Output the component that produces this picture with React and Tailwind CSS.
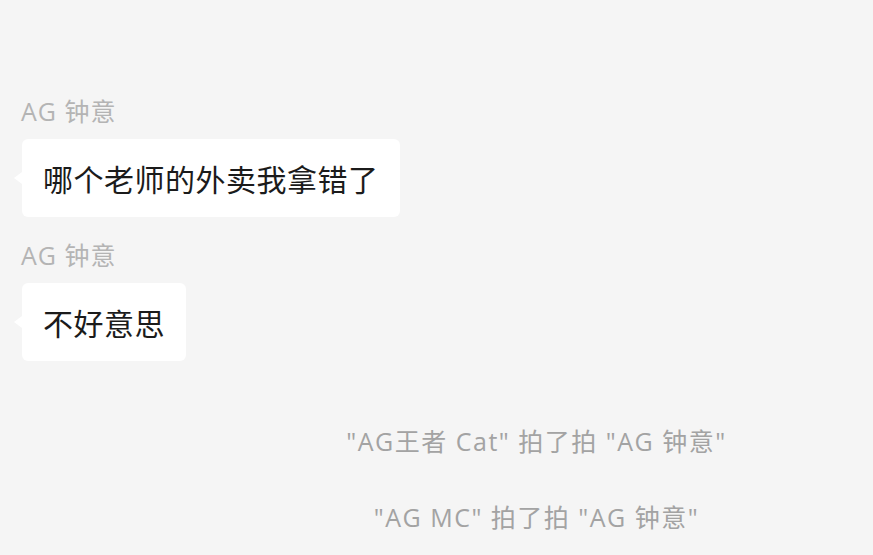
import React from "react";

const CJK = { fontFamily: '"Noto Sans CJK SC", "Noto Sans", sans-serif' };
const MIXED = { fontFamily: '"Open Sans", "Noto Sans CJK SC", sans-serif' };

function Sender({ name, className = "" }) {
    return (
        <div className={`text-[25px] leading-[32px] tracking-[1px] text-[#b4b4b4] ${className}`} style={MIXED}>
            {name}
        </div>
    );
}

function Bubble({ children, className = "" }) {
    return (
        <div
            className={`relative w-fit rounded-[6px] bg-white px-[21px] py-[21px] text-[30px] leading-[36px] tracking-[0.5px] text-[#1b1b1b] ${className}`}
            style={CJK}
        >
            <span className="absolute left-[-8px] top-1/2 -translate-y-1/2 border-y-[6px] border-r-[8px] border-y-transparent border-r-white" />
            {children}
        </div>
    );
}

function SystemNote({ children }) {
    return (
        <div className="text-center text-[25px] leading-[30px] tracking-[1.5px] text-[#a3a3a3]" style={MIXED}>
            {children}
        </div>
    );
}

export default function App() {
    return (
        <div className="h-[555px] w-[873px] overflow-hidden bg-[#f5f5f5]">
            <div className="flex flex-col pl-[22px] pt-[95px]">
                <Sender name="AG 钟意" className="-ml-[1px]" />
                <Bubble className="mt-[12px]">哪个老师的外卖我拿错了</Bubble>
                <Sender name="AG 钟意" className="-ml-[1px] mt-[22px]" />
                <Bubble className="mt-[12px]">不好意思</Bubble>
            </div>
            <div className="mt-[65px] flex flex-col gap-[46px] pl-[200px]">
                <SystemNote>"AG王者 Cat" 拍了拍 "AG 钟意"</SystemNote>
                <SystemNote>"AG MC" 拍了拍 "AG 钟意"</SystemNote>
            </div>
        </div>
    );
}
